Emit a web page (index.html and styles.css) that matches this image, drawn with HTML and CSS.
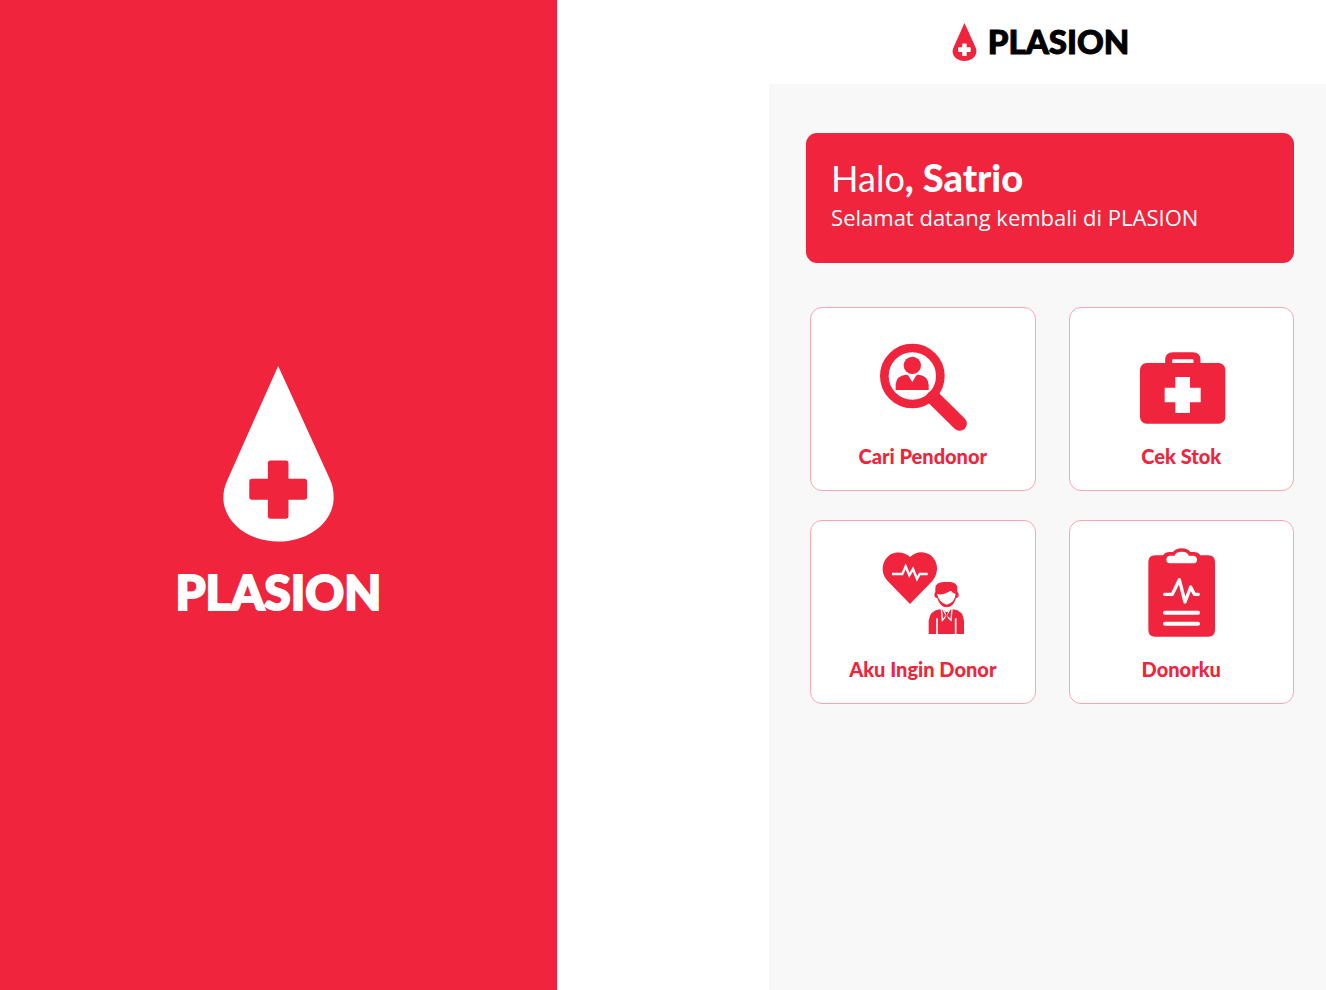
FILE: index.html
```html
<!DOCTYPE html>
<html lang="id">
<head>
<meta charset="utf-8">
<meta name="viewport" content="width=device-width, initial-scale=1">
<title>PLASION</title>
<link rel="stylesheet" href="styles.css">
</head>
<body>
<div class="screens">
  <section class="splash" aria-label="PLASION">
    <svg class="splash-drop" viewBox="190 47 334 529" aria-hidden="true">
      <path fill="currentColor" d="M356 47L512 388Q523 412 523 443C523 514 451 575 357 575S191 514 191 443Q191 415 204 388Z"/>
      <path class="splash-cross" d="M333 331h46q8 0 8 8v47h48q8 0 8 8v47q0 8-8 8h-48v49q0 8-8 8h-46q-8 0-8-8v-49h-48q-8 0-8-8v-47q0-8 8-8h48v-47q0-8 8-8z"/>
    </svg>
    <p class="splash-name">PLASION</p>
  </section>

  <section class="home">
    <header class="topbar">
      <svg class="topbar-drop" viewBox="190 47 334 529" aria-hidden="true">
        <path fill="currentColor" d="M356 47L512 388Q523 412 523 443C523 514 451 575 357 575S191 514 191 443Q191 415 204 388Z"/>
        <path fill="#fff" d="M333 331h46q8 0 8 8v47h48q8 0 8 8v47q0 8-8 8h-48v49q0 8-8 8h-46q-8 0-8-8v-49h-48q-8 0-8-8v-47q0-8 8-8h48v-47q0-8 8-8z"/>
      </svg>
      <span class="topbar-name">PLASION</span>
    </header>

    <main class="content">
      <div class="banner">
        <h1 class="greeting">Halo<strong>, Satrio</strong></h1>
        <p class="welcome">Selamat datang kembali di PLASION</p>
      </div>

      <nav class="tiles" aria-label="Menu">
        <a class="tile" href="#cari-pendonor">
          <svg class="tile-icon" viewBox="-6 -24 330 315" aria-hidden="true">
            <circle cx="127" cy="123" r="84" fill="none" stroke="currentColor" stroke-width="26"/>
            <path d="M190 188L269 266" stroke="currentColor" stroke-width="43" stroke-linecap="round"/>
            <circle cx="127" cy="91" r="26" fill="currentColor"/>
            <path fill="currentColor" d="M77 165V150Q79 121 108 119Q112 119 115 122L127 141L138 122Q141 119 146 119Q174 122 176 150V165Z"/>
          </svg>
          <span class="tile-label">Cari Pendonor</span>
        </a>
        <a class="tile" href="#cek-stok">
          <svg class="tile-icon" viewBox="198 81 330 315" aria-hidden="true">
            <path fill="none" stroke="currentColor" stroke-width="21" d="M326 195V180Q326 167 339 167H398Q411 167 411 180V195"/>
            <rect x="240" y="189" width="256" height="182" rx="20" fill="currentColor"/>
            <path fill="#fff" d="M346 231h44v32h32v44h-32v32h-44v-32h-32v-44h32z"/>
          </svg>
          <span class="tile-label">Cek Stok</span>
        </a>
        <a class="tile" href="#aku-ingin-donor">
          <svg class="tile-icon" viewBox="-6 0 330 315" aria-hidden="true">
            <path fill="currentColor" d="M120 192L53 123C29 97 36 60 62 43C82 33 104 36 120 51C137 35 158 33 177 43C204 59 210 97 187 123Z"/>
            <path fill="none" stroke="#fff" stroke-width="7" d="M66 102H97L107 79L118 106L129 87L141 117L149 102H173"/>
            <path fill="currentColor" d="M196 156V144Q196 127 222 126H242Q262 128 262 145V156Q268 160 265 171L258 175Q250 202 230 202T202 175L194 171Q191 161 196 156Z"/>
            <path fill="#fff" d="M201 161Q216 167 234 157Q244 149 248 158L257 162Q254 190 230 194Q207 188 201 161Z"/>
            <path fill="currentColor" d="M176 282V243Q179 211 211 208H248Q280 211 282 243V282Z"/>
            <path fill="none" stroke="#fff" stroke-width="5" d="M201 235V282M257 235V282"/>
            <path fill="none" stroke="#fff" stroke-width="4" d="M214 206L217 241L229 227L243 241L246 206M218 206L229 226L241 206"/>
            <path fill="#fff" d="M220 207H240L230 219Z"/>
            <path fill="currentColor" d="M226 216H234L231 225L236 245L230 249L224 245L229 225Z"/>
          </svg>
          <span class="tile-label">Aku Ingin Donor</span>
        </a>
        <a class="tile" href="#donorku">
          <svg class="tile-icon" viewBox="-12 0 330 315" aria-hidden="true">
            <path fill="currentColor" d="M75 46H99Q106 36 119 36H129Q137 25 155 25T181 36H191Q204 36 211 46H235Q255 47 255 66V270Q255 290 235 290H75Q55 290 55 270V66Q55 47 75 46Z"/>
            <path fill="#fff" d="M119 47H134Q137 35 155 35T176 47H190Q201 48 201 59Q201 70 190 70H119Q109 69 109 59Q109 48 119 47Z"/>
            <path fill="none" stroke="#fff" stroke-width="10" stroke-linecap="round" stroke-linejoin="round" d="M104 163H127L148 119L165 186L182 141L193 163H205"/>
            <path stroke="#fff" stroke-width="12" stroke-linecap="round" d="M105 218H204M105 251H204"/>
          </svg>
          <span class="tile-label">Donorku</span>
        </a>
      </nav>
    </main>
  </section>
</div>
</body>
</html>
```
FILE: styles.css
```css
:root {
  --red: #f0243c;
  --display: Lato, "Open Sans", sans-serif;
}

* {
  box-sizing: border-box;
}

body {
  margin: 0;
  background: #fff;
  font-family: var(--display);
}

h1,
p {
  margin: 0;
}

.screens {
  display: grid;
  grid-template-columns: 42fr 16fr 42fr;
  min-height: 100vh;
}

.splash {
  display: flex;
  flex-direction: column;
  align-items: center;
  justify-content: center;
  gap: 18px;
  background: var(--red);
  color: #fff;
}

.splash-drop {
  width: 111px;
  height: 176px;
}

.splash-cross {
  fill: var(--red);
}

.splash-name {
  font-size: 48px;
  font-weight: 900;
  line-height: 64px;
  -webkit-text-stroke: 2px currentColor;
}

.home {
  grid-column: 3;
  display: flex;
  flex-direction: column;
}

.topbar {
  display: flex;
  align-items: center;
  justify-content: center;
  gap: 11px;
  height: 84px;
  padding-right: 14px;
}

.topbar-drop {
  width: 25px;
  height: 38px;
  color: var(--red);
}

.topbar-name {
  padding-bottom: 2px;
  color: #000;
  font-size: 33px;
  font-weight: 900;
  line-height: 40px;
  -webkit-text-stroke: 1px currentColor;
}

.content {
  flex: 1;
  padding: 49px 32px 32px 37px;
  background: #f8f8f8;
}

.banner {
  padding: 23px 25px 29px;
  border-radius: 11px;
  background: var(--red);
  color: #fff;
}

.greeting {
  font-size: 36px;
  font-weight: 400;
  line-height: 44px;
}

.greeting strong {
  font-size: 38px;
  font-weight: 900;
  line-height: 1;
}

.welcome {
  font-family: "Open Sans", sans-serif;
  font-size: 22px;
  font-weight: 400;
  line-height: 34px;
}

.tiles {
  display: grid;
  grid-template-columns: 1fr 1fr;
  gap: 29px 33px;
  margin: 44px 0 0 4px;
}

.tile {
  display: flex;
  flex-direction: column;
  align-items: center;
  gap: 10px;
  height: 184px;
  padding-top: 19px;
  border: 1px solid #f9a6b1;
  border-radius: 12px;
  background: #fff;
  color: var(--red);
  text-decoration: none;
}

.tile-icon {
  width: 110px;
  height: 105px;
}

.tile-label {
  font-size: 20px;
  font-weight: 900;
  line-height: 28px;
}
```
